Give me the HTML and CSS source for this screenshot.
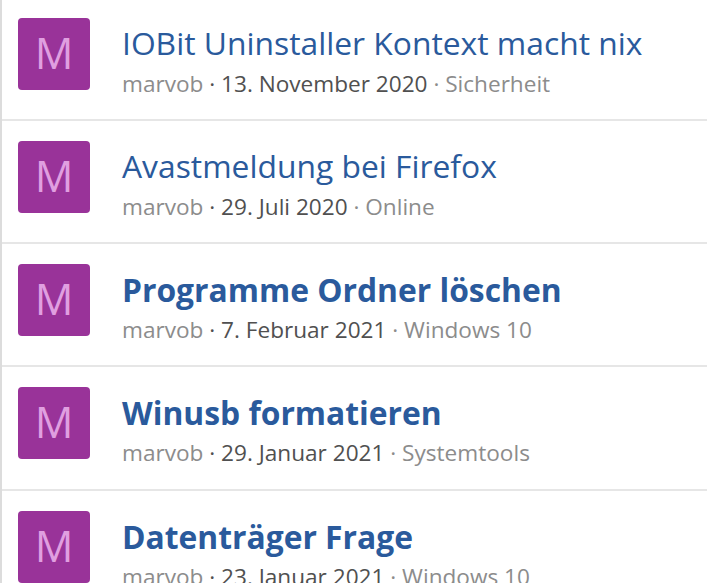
FILE: index.html
```html
<!DOCTYPE html>
<html lang="de">
<head>
  <meta charset="UTF-8" />
  <title>Themen</title>
  <link rel="stylesheet" href="styles.css">
</head>
<body>
  <div class="list">
    <div class="item">
      <div class="avatar">M</div>
      <div class="body">
        <a class="title">IOBit Uninstaller Kontext macht nix</a>
        <div class="meta"><span class="user">marvob</span> · 13. November 2020 <span class="forum">· Sicherheit</span></div>
      </div>
    </div>
    <div class="item">
      <div class="avatar">M</div>
      <div class="body">
        <a class="title">Avastmeldung bei Firefox</a>
        <div class="meta"><span class="user">marvob</span> · 29. Juli 2020 <span class="forum">· Online</span></div>
      </div>
    </div>
    <div class="item unread">
      <div class="avatar">M</div>
      <div class="body">
        <a class="title">Programme Ordner löschen</a>
        <div class="meta"><span class="user">marvob</span> · 7. Februar 2021 <span class="forum">· Windows 10</span></div>
      </div>
    </div>
    <div class="item unread">
      <div class="avatar">M</div>
      <div class="body">
        <a class="title">Winusb formatieren</a>
        <div class="meta"><span class="user">marvob</span> · 29. Januar 2021 <span class="forum">· Systemtools</span></div>
      </div>
    </div>
    <div class="item unread">
      <div class="avatar">M</div>
      <div class="body">
        <a class="title">Datenträger Frage</a>
        <div class="meta"><span class="user">marvob</span> · 23. Januar 2021 <span class="forum">· Windows 10</span></div>
      </div>
    </div>
  </div>
</body>
</html>
```

FILE: styles.css
```css
* {
  box-sizing: border-box;
  font-family: 'Open Sans', 'Noto Sans', sans-serif;
}

html, body {
  height: 100%;
  overflow: hidden;
}

body {
  margin: 0;
  background: #fff;
}

.list {
  margin-top: -2px;
  border-left: 2px solid #dcdcdc;
}

.item {
  display: flex;
  height: 123.15px;
  padding: 20px 16px 0;
  border-bottom: 2px solid #e6e6e6;
}

.avatar {
  width: 72px;
  height: 72px;
  flex-shrink: 0;
  margin-right: 32px;
  background: #993399;
  border-radius: 4px;
  color: #e09fe0;
  font-size: 43px;
  line-height: 70px;
  text-align: center;
}

.title {
  display: block;
  margin-top: 4px;
  font-size: 31.8px;
  line-height: 42px;
  color: #2a5a9c;
  white-space: nowrap;
}

.unread .title {
  margin-top: 5px;
  font-weight: bold;
}

.meta {
  font-size: 22.6px;
  line-height: 30px;
  margin-top: 5px;
  color: #505050;
  white-space: nowrap;
}

.unread .meta {
  margin-top: 4px;
}

.user, .forum {
  color: #8c8c8c;
}
```
